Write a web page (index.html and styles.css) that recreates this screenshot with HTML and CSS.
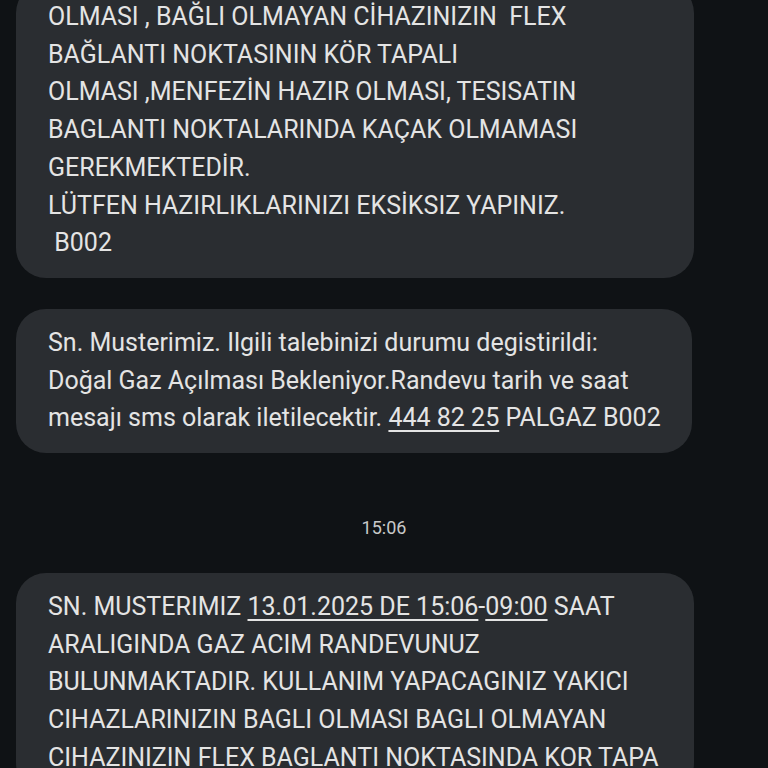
FILE: index.html
```html
<!DOCTYPE html>
<html lang="tr">
<head>
<meta charset="utf-8">
<link rel="stylesheet" href="styles.css">
</head>
<body>
<div class="thread">
  <div class="bubble first">
    <p class="msg">OLMASI , BAĞLI OLMAYAN CİHAZINIZIN&nbsp; FLEX<br>BAĞLANTI NOKTASININ KÖR TAPALI<br>OLMASI ,MENFEZİN HAZIR OLMASI, TESISATIN<br>BAGLANTI NOKTALARINDA KAÇAK OLMAMASI<br>GEREKMEKTEDİR.<br>LÜTFEN HAZIRLIKLARINIZI EKSİKSIZ YAPINIZ.<br>&nbsp;B002</p>
  </div>
  <div class="bubble second">
    <p class="msg">Sn. Musterimiz. Ilgili talebinizi durumu degistirildi:<br>Doğal Gaz Açılması Bekleniyor.Randevu tarih ve saat<br>mesajı sms olarak iletilecektir. <span class="link">444 82 25</span> PALGAZ B002</p>
  </div>
  <div class="stamp">15:06</div>
  <div class="bubble third">
    <p class="msg">SN. MUSTERIMIZ <span class="link">13.01.2025 DE 15:06</span>-<span class="link">09:00</span> SAAT<br>ARALIGINDA GAZ ACIM RANDEVUNUZ<br>BULUNMAKTADIR. KULLANIM YAPACAGINIZ YAKICI<br>CIHAZLARINIZIN BAGLI OLMASI BAGLI OLMAYAN<br>CIHAZINIZIN FLEX BAGLANTI NOKTASINDA KOR TAPA</p>
  </div>
</div>
</body>
</html>
```

FILE: styles.css
```css
html, body {
  margin: 0;
  padding: 0;
  background: #0f1215;
  height: 100%;
  overflow: hidden;
}
.thread {
  display: flex;
  flex-direction: column;
  align-items: flex-start;
  padding: 0 16px;
  font-family: Roboto, "Noto Sans", sans-serif;
}
.bubble {
  background: #2a2d31;
  border-radius: 30px;
  padding: 15px 30px 16px 32px;
  box-sizing: border-box;
  width: 678px;
}
.first {
  margin-top: -17px;
}
.second {
  margin-top: 31px;
  width: 676px;
}
.msg {
  margin: 0;
  color: #e4e4e4;
  font-size: 25px;
  line-height: 37.7px;
  white-space: nowrap;
}
.link {
  text-decoration: underline;
  text-underline-offset: 4px;
  text-decoration-thickness: 1.5px;
}
.stamp {
  align-self: center;
  color: #c8c9c9;
  font-size: 18px;
  height: 120px;
  line-height: 150px;
}
```
